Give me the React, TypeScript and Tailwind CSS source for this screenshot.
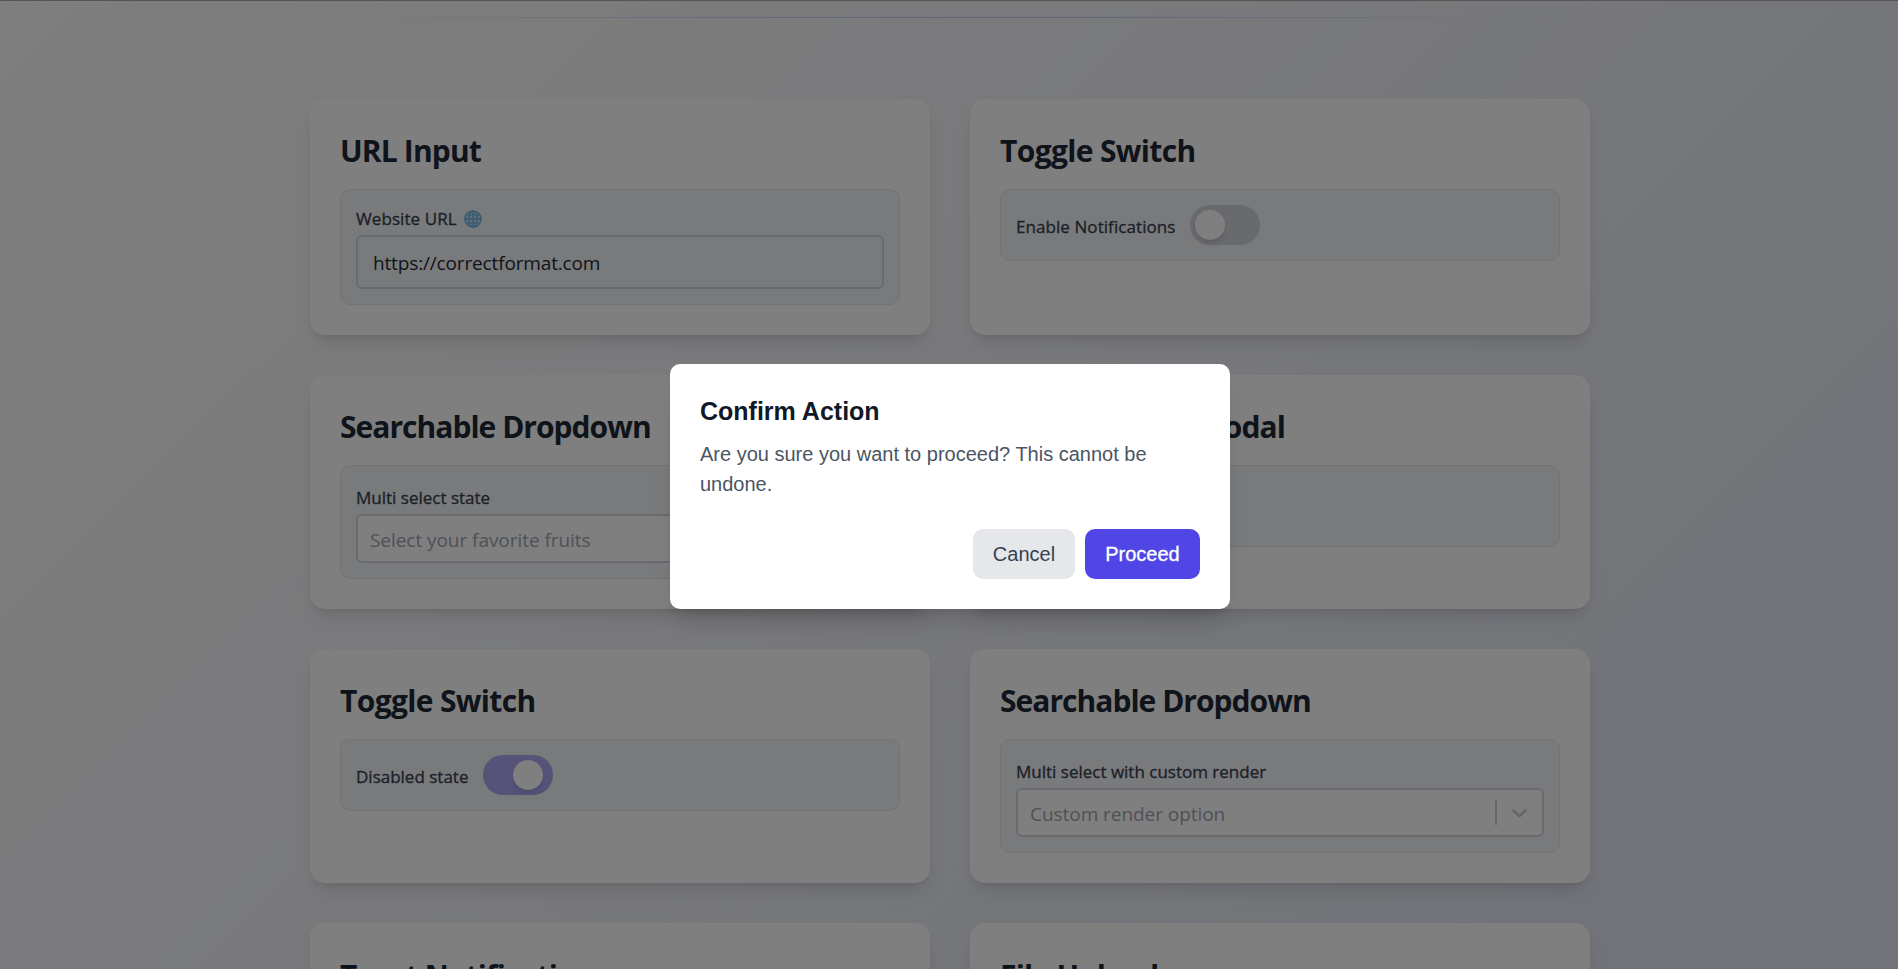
import React from "react";

function Card({ title, spacing, children }: { title: string; spacing: string; children?: React.ReactNode }) {
  return (
    <section className="rounded-[15px] bg-white p-[30px] shadow-[0_12px_19px_-4px_rgba(0,0,0,0.1),0_5px_8px_-5px_rgba(0,0,0,0.1)]">
      <h2 className={"mb-[18px] h-[42px] pt-[1px] whitespace-nowrap text-[30px] leading-[41px] font-bold text-[#1f2937] " + spacing}>{title}</h2>
      {children}
    </section>
  );
}

function Panel({ children, className = "" }: { children?: React.ReactNode; className?: string }) {
  return <div className={"rounded-[10px] border border-[#e5e7eb] bg-[#f3f4f6] px-[15px] " + className}>{children}</div>;
}

function Toggle({ label, on, spacing }: { label: string; on?: boolean; spacing: string }) {
  return (
    <Panel className="flex h-[72px] items-center gap-[15px]">
      <span className={"pt-[2px] text-[17px] leading-[25px] font-medium text-[#374151] [-webkit-text-stroke:0.3px_#374151] " + spacing}>{label}</span>
      <span className={"flex h-10 w-[70px] items-center rounded-full p-[5px] " + (on ? "justify-end bg-[#aaa6f0] pr-[10px]" : "bg-[#d1d5db]")}>
        <span className="size-[30px] rounded-full bg-white shadow-md" />
      </span>
    </Panel>
  );
}

function Select({ label, placeholder }: { label: string; placeholder: string }) {
  return (
    <Panel className="h-[114px] pt-5">
      <div className="h-7 text-[17px] leading-[24px] font-medium text-[#374151] [-webkit-text-stroke:0.3px_#374151]">{label}</div>
      <div className="flex h-[49px] items-center rounded-[6px] border-2 border-[#d1d5db] bg-white pl-3">
        <span className="flex-1 pt-[3px] text-[19px] tracking-[-0.05px] text-[#9ca3af]">{placeholder}</span>
        <span className="h-[25px] w-[2px] bg-[#cccccc]" />
        <svg className="mx-[10px] size-[25px] fill-[#cccccc]" viewBox="0 0 20 20">
          <path d="M4.516 7.548c0.436-0.446 1.043-0.481 1.576 0l3.908 3.747 3.908-3.747c0.533-0.481 1.141-0.446 1.574 0 0.436 0.445 0.408 1.197 0 1.615-0.406 0.418-4.695 4.502-4.695 4.502-0.217 0.223-0.502 0.335-0.787 0.335s-0.57-0.112-0.789-0.335c0 0-4.287-4.084-4.695-4.502s-0.436-1.17 0-1.615z" />
        </svg>
      </div>
    </Panel>
  );
}

function Globe() {
  return (
    <svg className="size-[18px]" viewBox="0 0 18 18" fill="none" stroke="#6fb2e2" strokeWidth="1.3">
      <circle cx="9" cy="9" r="8.2" fill="#c3dff2" />
      <ellipse cx="9" cy="9" rx="4.1" ry="8.2" />
      <path d="M9 .8v16.4M.8 9h16.4M2.2 4.8h13.6M2.2 13.2h13.6" />
    </svg>
  );
}

export default function App() {
  return (
    <div className="relative h-[969px] w-full overflow-hidden bg-linear-135 from-[#fcfcfa] from-0% via-[#f2f3f8] via-45% to-[#e2e6f1] to-90% font-['Open_Sans','Noto_Sans',sans-serif]">
      <div className="h-px bg-[#aaaaaa]" />
      <div className="flex flex-col pr-[308px] pl-[310px]">
        <div className="mt-4 mb-[81px] h-px bg-linear-to-r from-transparent via-[#c0c2fa] to-transparent" />
        <main className="grid grid-cols-2 gap-10">
          <Card title="URL Input" spacing="tracking-[-0.85px]">
            <Panel className="h-[116px] pt-[15px]">
              <div className="flex h-[30px] items-start gap-[7px] pt-[2px] text-[17px] leading-[24px] font-medium text-[#374151] [-webkit-text-stroke:0.3px_#374151]">
                <span className="tracking-[0.08px]">Website URL</span>
                <span className="pt-[3px]"><Globe /></span>
              </div>
              <div className="flex h-[54px] items-center rounded-[6px] border-2 border-[#d1d5db] px-[15px] pt-[2px] text-[19px] tracking-[-0.15px] text-[#1f2937]">https://correctformat.com</div>
            </Panel>
          </Card>
          <Card title="Toggle Switch" spacing="tracking-[-0.65px]">
            <Toggle label="Enable Notifications" spacing="tracking-[0.07px]" />
          </Card>
          <Card title="Searchable Dropdown" spacing="tracking-[-0.98px]">
            <Select label="Multi select state" placeholder="Select your favorite fruits" />
          </Card>
          <Card title="Confirmation Modal" spacing="tracking-[-0.87px]">
            <Panel className="h-[82px]" />
          </Card>
          <Card title="Toggle Switch" spacing="tracking-[-0.65px]">
            <Toggle label="Disabled state" on spacing="" />
          </Card>
          <Card title="Searchable Dropdown" spacing="tracking-[-0.98px]">
            <Select label="Multi select with custom render" placeholder="Custom render option" />
          </Card>
          <Card title="Toast Notification" spacing="tracking-[-0.9px] pt-[2px]" />
          <Card title="File Upload" spacing="tracking-tight pt-[2px]" />
        </main>
      </div>
      <div className="absolute inset-0 flex items-start justify-center bg-black/50 pt-[364px] pl-[2px]">
        <div role="dialog" className="h-[245px] w-[560px] rounded-[10px] bg-white p-[30px] font-['Liberation_Sans',sans-serif] shadow-xl">
          <h3 className="mb-[10px] text-[25px] leading-[35px] font-semibold text-[#111827]">Confirm Action</h3>
          <p className="mb-[30px] text-[20px] leading-[30px] text-[#4b5563]">Are you sure you want to proceed? This cannot be undone.</p>
          <div className="flex justify-end gap-[10px] text-[20px]">
            <button className="h-[50px] w-[102px] rounded-[10px] bg-[#e5e7eb] text-[#374151]">Cancel</button>
            <button className="h-[50px] w-[115px] rounded-[10px] bg-[#4f46e5] text-white [-webkit-text-stroke:0.3px_#ffffff]">Proceed</button>
          </div>
        </div>
      </div>
    </div>
  );
}
